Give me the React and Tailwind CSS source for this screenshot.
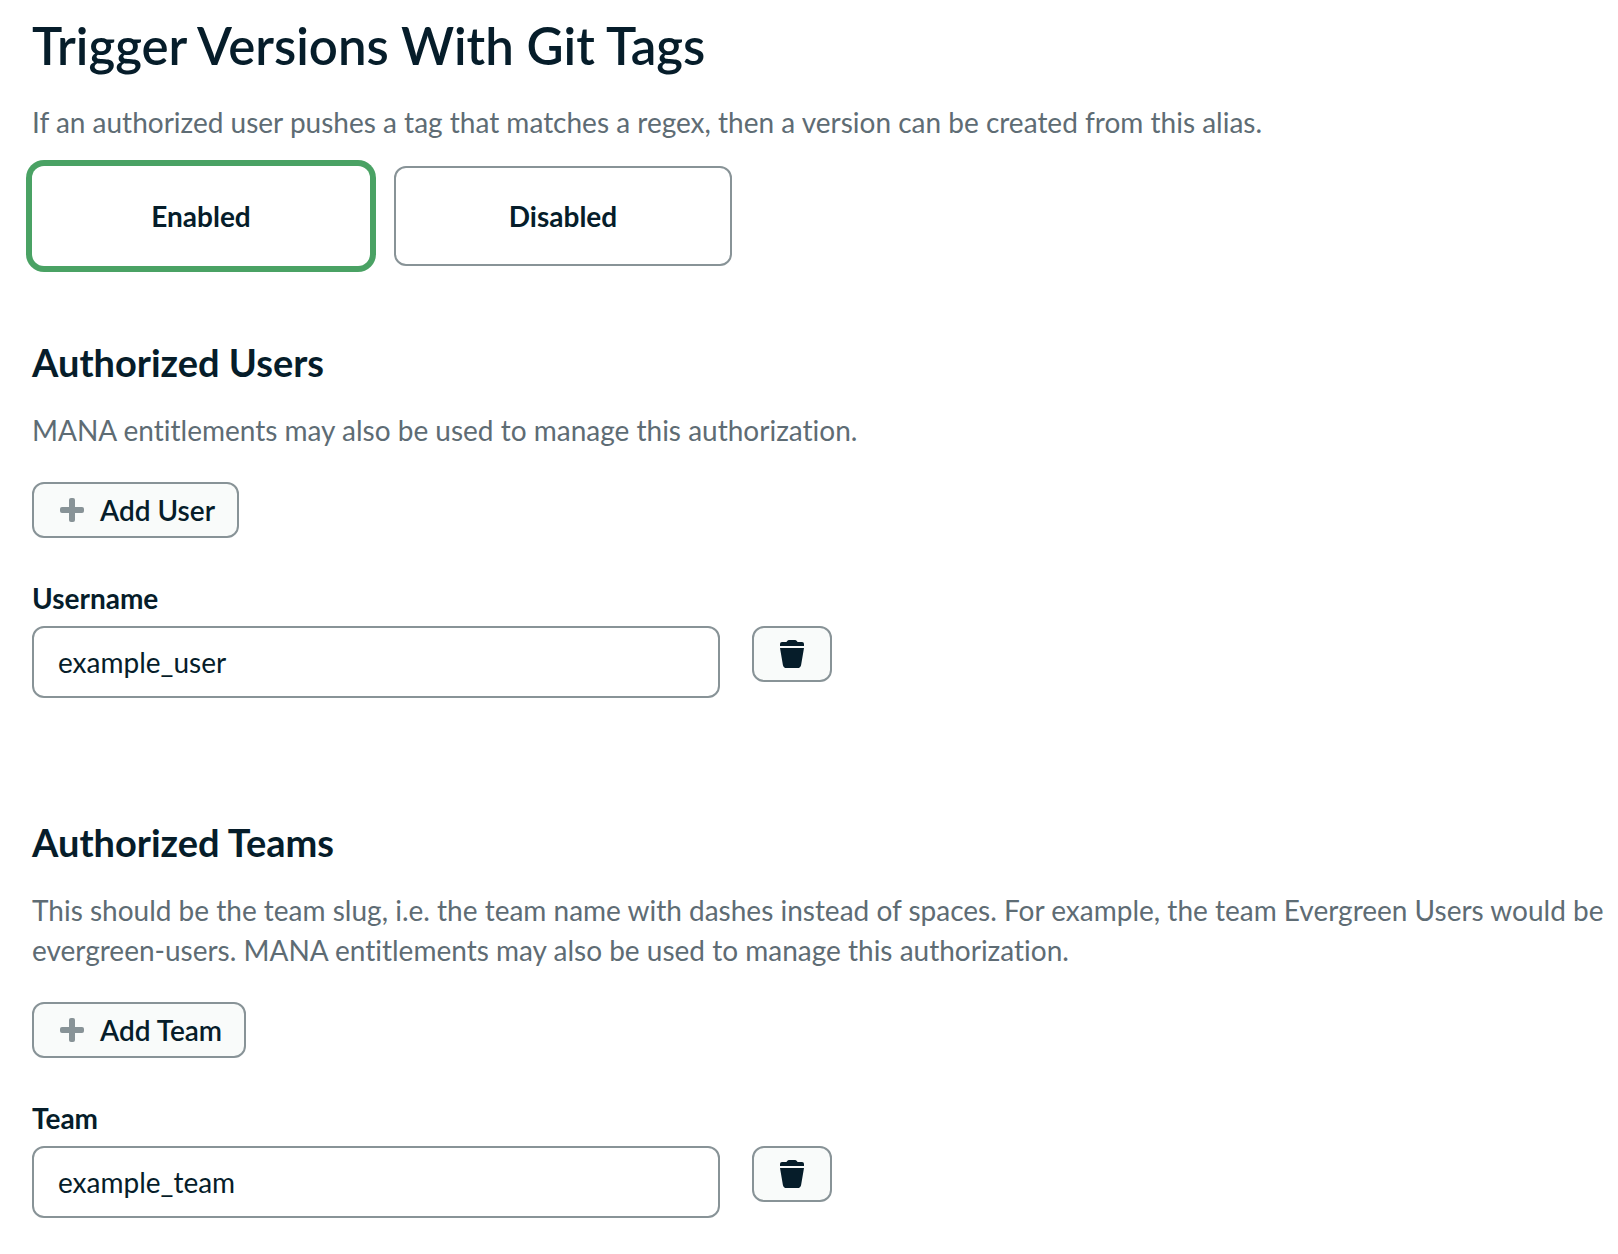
import { useState } from "react";

function PlusIcon() {
  return (
    <svg className="size-8 shrink-0" viewBox="0 0 32 32" fill="#889397" aria-hidden="true">
      <rect x="4" y="13" width="24" height="6" rx="2" />
      <rect x="13" y="4" width="6" height="24" rx="2" />
    </svg>
  );
}

function TrashIcon() {
  return (
    <svg className="size-8 shrink-0" viewBox="0 0 32 32" fill="#061d2a" aria-hidden="true">
      <path d="M10.4 4 11.4 2.7A2 2 0 0 1 13 2H19A2 2 0 0 1 20.6 2.7L21.6 4H26A2 2 0 0 1 28 6V8H4V6A2 2 0 0 1 6 4Z" />
      <path d="M4 10H28L25.1 26.9A3.7 3.7 0 0 1 21.4 30H10.6A3.7 3.7 0 0 1 6.9 26.9Z" />
    </svg>
  );
}

function RadioBox({ label, checked, onChange }) {
  return (
    <label
      className={
        "relative flex h-[100px] w-[338px] cursor-pointer items-center justify-center rounded-xl text-[28px] leading-10 font-bold " +
        (checked ? "ring-6 ring-[#4aa264]" : "border-2 border-[#889397]")
      }
    >
      <input type="radio" name="git-tags" className="sr-only" checked={checked} onChange={onChange} />
      {label}
    </label>
  );
}

function Section({ title, description, addLabel, fieldLabel, id, initial }) {
  const [value, setValue] = useState(initial);
  return (
    <section>
      <h2 className="text-[38px] leading-12 font-bold">{title}</h2>
      <p className="mt-6 text-[28px] leading-10 text-[#5e6c74]">{description}</p>
      <button
        type="button"
        className="mt-8 flex h-14 items-center gap-3 rounded-xl border-2 border-[#889397] bg-[#f9fbfa] px-[22px] text-[28px] leading-10 font-semibold"
      >
        <PlusIcon />
        {addLabel}
      </button>
      <label htmlFor={id} className="mt-10 block text-[28px] leading-10 font-bold">
        {fieldLabel}
      </label>
      <div className="mt-2 flex items-start gap-8">
        <input
          id={id}
          type="text"
          value={value}
          onChange={(e) => setValue(e.target.value)}
          className="h-[72px] w-[688px] rounded-xl border-2 border-[#889397] bg-white px-6 text-[28px]"
        />
        <button
          type="button"
          aria-label={"Delete " + fieldLabel}
          className="flex h-14 w-20 items-center justify-center rounded-xl border-2 border-[#889397] bg-[#f9fbfa]"
        >
          <TrashIcon />
        </button>
      </div>
    </section>
  );
}

export default function App() {
  const [enabled, setEnabled] = useState(true);
  return (
    <main className="min-h-screen bg-white pt-3.5 pr-2 pb-9 pl-8 font-['Lato',sans-serif] text-[#061d2a] [font-variant-ligatures:none]">
      <h1 className="text-[51px] leading-16 font-semibold">Trigger Versions With Git Tags</h1>
      <p className="mt-6 text-[28px] leading-10 text-[#5e6c74]">
        If an authorized user pushes a tag that matches a regex, then a version can be created from this alias.
      </p>
      <div role="radiogroup" aria-label="Trigger Versions With Git Tags" className="mt-6 mb-[72px] flex gap-6">
        <RadioBox label="Enabled" checked={enabled} onChange={() => setEnabled(true)} />
        <RadioBox label="Disabled" checked={!enabled} onChange={() => setEnabled(false)} />
      </div>
      <div className="flex flex-col gap-[120px]">
        <Section
          id="username"
          title="Authorized Users"
          description="MANA entitlements may also be used to manage this authorization."
          addLabel="Add User"
          fieldLabel="Username"
          initial="example_user"
        />
        <Section
          id="team"
          title="Authorized Teams"
          description="This should be the team slug, i.e. the team name with dashes instead of spaces. For example, the team Evergreen Users would be evergreen-users. MANA entitlements may also be used to manage this authorization."
          addLabel="Add Team"
          fieldLabel="Team"
          initial="example_team"
        />
      </div>
    </main>
  );
}
